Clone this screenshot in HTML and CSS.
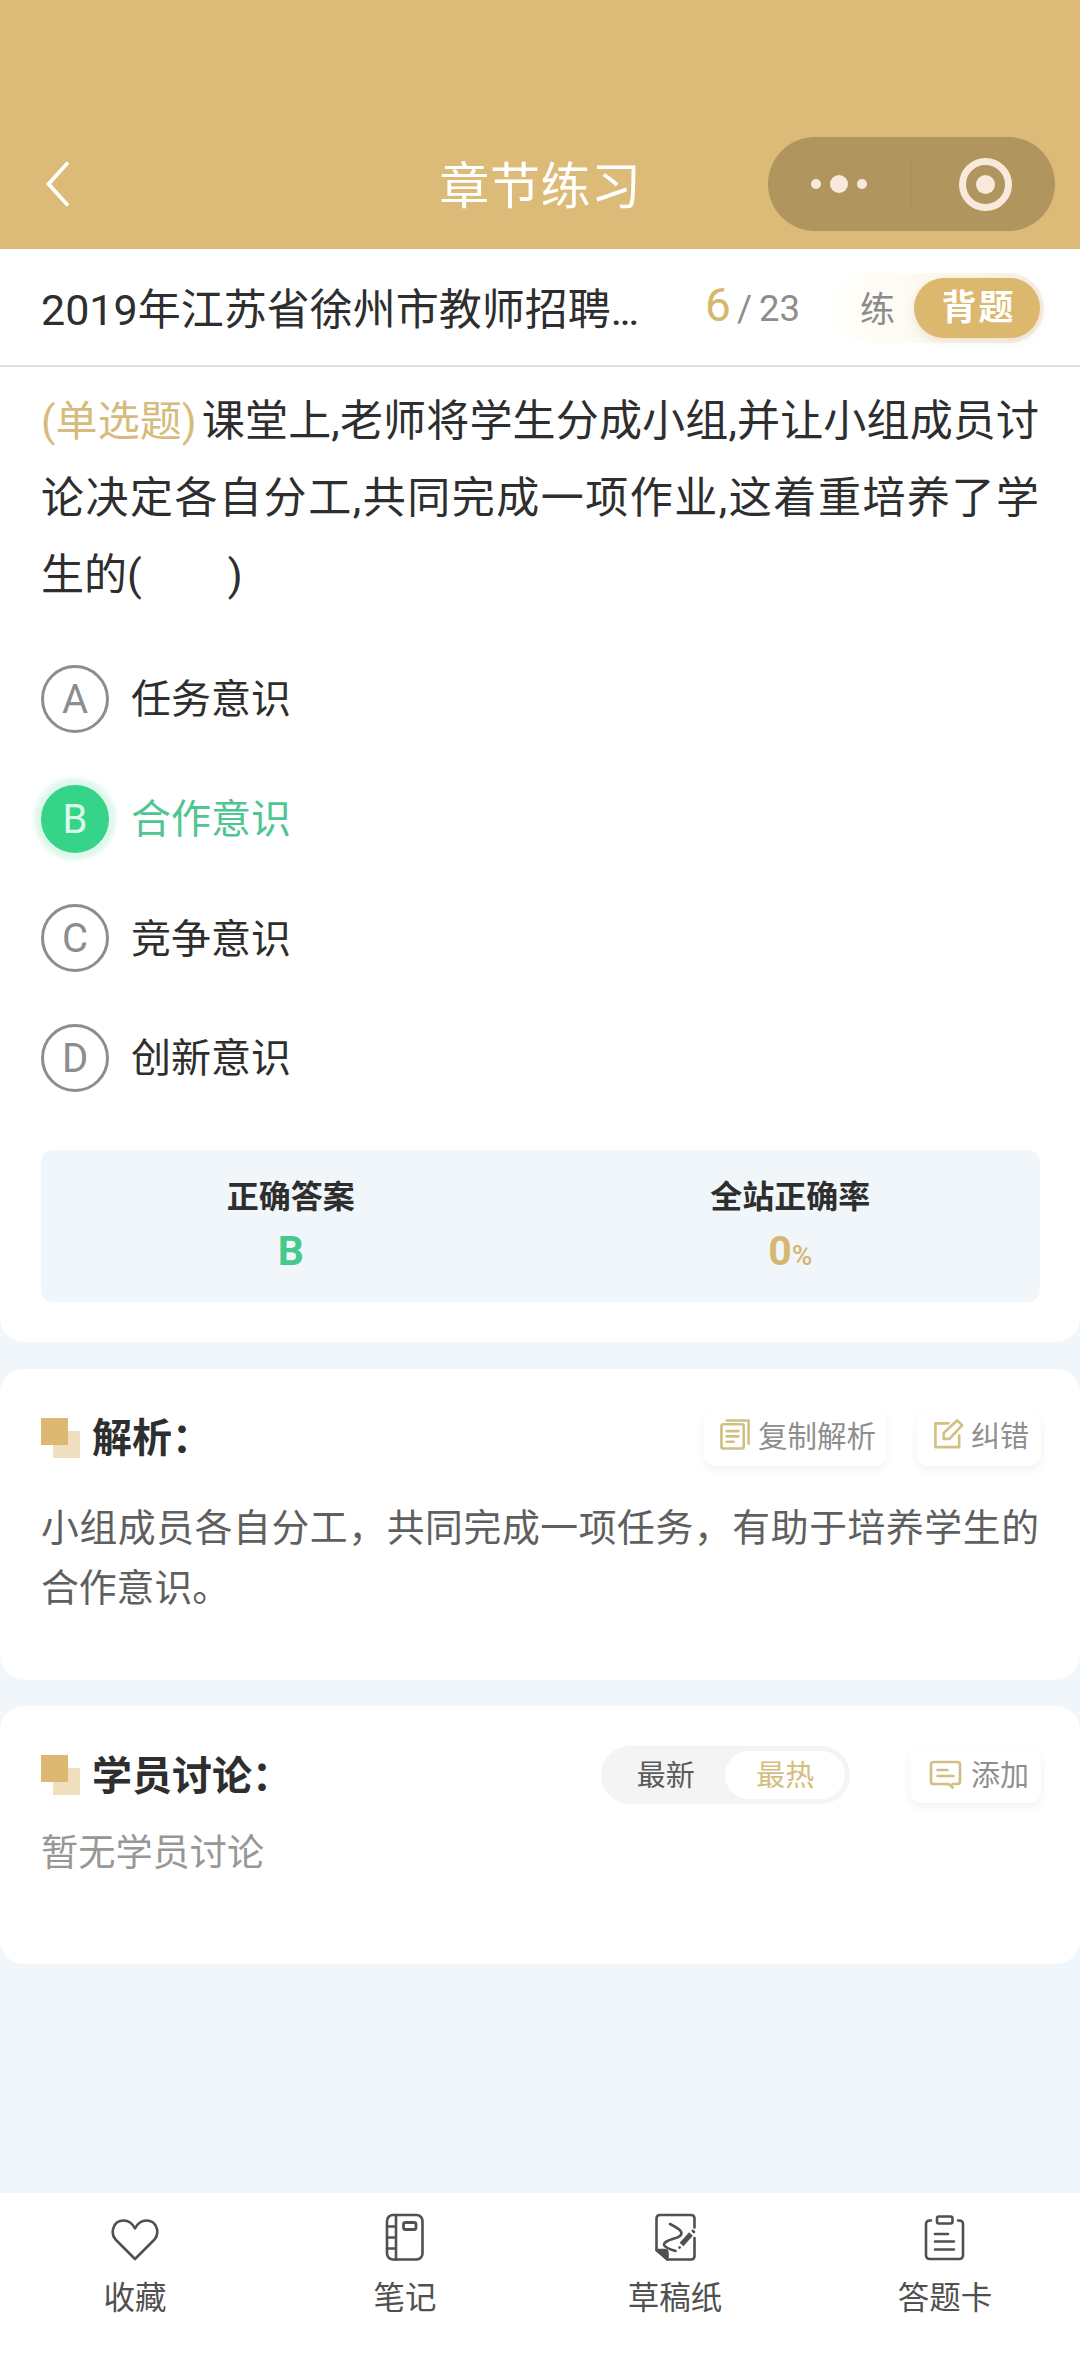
FILE: index.html
```html
<!DOCTYPE html>
<html lang="zh-CN">
<head>
<meta charset="utf-8">
<title>章节练习</title>
<link rel="stylesheet" href="styles.css">
</head>
<body>
<header class="nav">
  <svg class="nav-back" viewBox="0 0 24 46"><path d="M22 1.5 2.5 23 22 44.5"/></svg>
  <h1 class="nav-title">章节练习</h1>
  <div class="capsule">
    <svg viewBox="0 0 287 94">
      <g fill="#f8e9db"><circle cx="48" cy="47" r="5"/><circle cx="71" cy="47" r="9"/><circle cx="94" cy="47" r="5"/><circle cx="217.500" cy="47.500" r="9.500"/></g>
      <path d="M143 21v50" stroke="#a58c58" stroke-width="1"/>
      <circle cx="217.500" cy="47.500" r="23" fill="none" stroke="#f8e9db" stroke-width="7"/>
    </svg>
  </div>
</header>

<section class="paper-bar">
  <div class="paper-name">2019年江苏省徐州市教师招聘<span class="dots">...</span></div>
  <div class="progress"><span class="current">6</span><span class="slash">/</span><span>23</span></div>
  <div class="mode"><span class="mode-item">练</span><span class="mode-item mode-on">背题</span></div>
</section>

<main>
  <section class="card question">
    <p class="stem"><span class="kind">(单选题)</span>课堂上,老师将学生分成小组,并让小组成员讨论决定各自分工,共同完成一项作业,这着重培养了学生的(&#12288;&#12288;)</p>
    <ul class="options">
      <li><span class="mark">A</span><span class="option-text">任务意识</span></li>
      <li class="right"><span class="mark">B</span><span class="option-text">合作意识</span></li>
      <li><span class="mark">C</span><span class="option-text">竞争意识</span></li>
      <li><span class="mark">D</span><span class="option-text">创新意识</span></li>
    </ul>
    <div class="answer">
      <div class="stat"><div class="stat-label">正确答案</div><div class="stat-value green">B</div></div>
      <div class="stat"><div class="stat-label">全站正确率</div><div class="stat-value gold">0<small>%</small></div></div>
    </div>
  </section>

  <section class="card analysis">
    <div class="head">
      <span class="squares"></span>
      <h2>解析：</h2>
      <button class="btn copy">
        <svg viewBox="0 0 32 32"><path d="M7 2h22.500v24"/><rect x="1.500" y="6" width="23" height="25" rx="2"/><path d="M7 13h12M7 18.500h12M7 24h7"/></svg>复制解析</button>
      <button class="btn">
        <svg viewBox="0 0 32 32"><path d="M16 5H2.500v24.500H27V17.500"/><path d="M11 21v-6L25 2l5 5-13 14z"/></svg>纠错</button>
    </div>
    <p class="text">小组成员各自分工，共同完成一项任务，有助于培养学生的合作意识。</p>
  </section>

  <section class="card discuss">
    <div class="head">
      <span class="squares"></span>
      <h2>学员讨论：</h2>
      <div class="sort"><span>最新</span><span class="sort-on">最热</span></div>
      <button class="btn add">
        <svg viewBox="0 0 32 32"><path d="M18 25H4q-2.500 0-2.500-2.500V5.500Q1.500 3 4 3h24q2.500 0 2.500 2.500v17Q30.500 25 28 25h-5"/><path d="M17 25q4 0 6 3.500M8 11h10M8 17h16"/></svg>添加</button>
    </div>
    <p class="empty">暂无学员讨论</p>
  </section>
</main>

<nav class="tabs">
  <a class="tab"><svg viewBox="0 0 48 48"><path d="M24 46 4.500 26.500C-1 20 2 7.500 12.500 7.500c5.500 0 9 3 11.500 8 2.500-5 6-8 11.500-8C46 7.500 49 20 43.500 26.500z"/></svg>收藏</a>
  <a class="tab"><svg viewBox="0 0 48 48"><rect x="6" y="2" width="35.500" height="44.500" rx="6"/><path d="M15 2v44.500M6 13.500h9M6 24.500h9M6 35.500h9"/><rect x="22.500" y="9.500" width="12.500" height="7" rx="2" stroke-width="2.800"/></svg>笔记</a>
  <a class="tab"><svg viewBox="0 0 48 48"><path d="M43.500 14.500V5.500q0-3.500-3.500-3.500H9Q5.500 2 5.500 5.500V37l11 9.500H40q3.500 0 3.500-3.500V25"/><path d="M5.500 37h8q3 0 3 3v6.500z" fill="#505050"/><path d="M19 11q9 4.500 11 7.500c3 6-9 7-13.500 9.500-6 3-5 6 8 10"/><path d="M30.500 31.500 40 21" stroke-width="5" stroke-linecap="butt"/><path d="m28.500 34.500.2-.2M41.800 17.800l1.200 1.200" stroke-width="2.600"/></svg>草稿纸</a>
  <a class="tab"><svg viewBox="0 0 48 48"><path d="M10 7.500H9Q5 7.500 5 11v31q0 4 4 4h29q4 0 4-4V11q0-3.500-4-3.500h-1" /><rect x="16" y="3.500" width="15.500" height="7" rx="2"/><path d="M14 21h13M14 28.500h19M14 36.500h19"/></svg>答题卡</a>
</nav>
</body>
</html>
```
FILE: styles.css
```css
* { box-sizing: border-box; margin: 0; padding: 0; }

body {
  display: flex;
  flex-direction: column;
  width: 1080px;
  height: 2376px;
  background: #f0f6fa;
  color: #2e2e2e;
  font-family: Roboto, "Noto Sans CJK SC", sans-serif;
}

main { flex: 1; }

/* top bar */
.nav {
  display: grid;
  grid-template-columns: 1fr auto 1fr;
  align-items: center;
  height: 249px;
  padding: 119px 25px 0 46px;
  background: #dcba78;
}
.nav-back { width: 24px; height: 46px; fill: none; stroke: #fff; stroke-width: 3.8; }
.nav-title { padding: 6px 20px 0 0; color: #fff; font-size: 50px; font-weight: 400; line-height: 60px; letter-spacing: .6px; }
.capsule { justify-self: end; width: 287px; height: 94px; border-radius: 47px; background: #b0955f; }
.capsule svg { display: block; }

.paper-bar {
  display: flex;
  align-items: center;
  height: 118px;
  padding: 0 36px 0 41px;
  border-bottom: 2px solid #dfe0e2;
  background: #fff;
}
.paper-name { width: 664px; padding-bottom: 3px; font-size: 43px; white-space: nowrap; }
.dots { letter-spacing: -2.500px; }
.progress { display: flex; align-items: baseline; width: 128px; color: #8d8d8f; font-size: 36.500px; line-height: 60px; }
.current { width: 32px; color: #d6b76e; font-size: 46px; }
.slash { width: 22px; }
.mode {
  display: flex;
  align-items: center;
  justify-content: flex-end;
  width: 211px;
  height: 70px;
  margin-top: 1px;
  padding-right: 4px;
  border-radius: 35px;
  background: linear-gradient(90deg, #fffefa, #fbf8ec 60%, #f6f0e6);
  color: #8b8b8b;
  font-size: 35px;
}
.mode-item { margin-right: 19px; padding-bottom: 2px; }
.mode-on {
  width: 126px;
  height: 60px;
  margin-right: 0;
  padding: 0 0 0 3px;
  border-radius: 30px;
  background: #dcb76e;
  box-shadow: 0 3px 8px rgba(190, 160, 110, .25);
  color: #fff;
  font-weight: 700;
  line-height: 61px;
  letter-spacing: 2px;
  text-align: center;
}

.card { border-radius: 24px; background: #fff; }

/* question */
.question { height: 975px; padding: 15px 40px 0 41px; border-radius: 0 0 24px 24px; }
.stem { width: 998px; padding-top: 1px; font-size: 43px; line-height: 77px; text-align: justify; }
.kind { margin-right: 5px; color: #d6bb7c; font-size: 42px; }
.options { display: grid; grid-template-rows: repeat(4, 119.7px); margin-top: 25px; list-style: none; }
.options li { display: flex; align-items: center; gap: 22px; font-size: 40px; }
.option-text { padding-bottom: 5px; }
.mark {
  width: 68px;
  height: 68px;
  border: 3px solid #8d8d90;
  border-radius: 50%;
  color: #8d8d90;
  font-size: 40px;
  line-height: 63px;
  text-align: center;
}
.right { color: #4fc592; }
.right .mark { border-color: #36d488; background: #36d488; box-shadow: 0 0 4px 7px #dff8eb; color: #d9fbe9; }
.answer { display: grid; grid-template-columns: 1fr 1fr; width: 999px; height: 152px; margin-top: 32px; padding-top: 26px; border-radius: 12px; background: #f0f6f9; text-align: center; }
.stat-label { font-size: 32px; font-weight: 700; line-height: 42px; }
.stat-value { font-size: 41px; font-weight: 700; line-height: 50px; margin-top: 8px; }
.stat-value small { font-size: 28px; font-weight: 500; }
.green { color: #45c98d; }
.gold { color: #d6b671; }

/* analysis and discussion */
.analysis { height: 311px; margin-top: 27px; padding: 40px 39px 0 41px; }
.discuss { height: 258px; margin-top: 26px; padding: 40px 39px 0 41px; }
.head { display: flex; align-items: center; height: 58px; }
.squares {
  width: 39px;
  height: 40px;
  margin-bottom: 1px;
  background: linear-gradient(#ddb873, #ddb873) 0 0 / 27px 27px no-repeat,
              linear-gradient(#efdfbf, #efdfbf) 100% 100% / 27px 27px no-repeat;
}
.head h2 { flex: 1; margin-left: 12px; padding-top: 4px; font-size: 40px; line-height: 58px; }
.analysis .head h2 { padding-top: 2px; }
.btn {
  display: flex;
  align-items: center;
  gap: 7px;
  height: 56px;
  margin-left: 30px;
  padding: 0 12px 9px 16px;
  border: 0;
  border-radius: 12px;
  background: #fff;
  box-shadow: 0 4px 8px rgba(60, 70, 80, .07);
  color: #8e8e8e;
  font: 29px Roboto, "Noto Sans CJK SC", sans-serif;
}
.btn svg { width: 31px; height: 32px; fill: none; stroke: #d2bf83; stroke-width: 2.7; stroke-linejoin: round; stroke-linecap: round; }
.btn.copy { padding: 0 11px 9px 16px; font-size: 29.500px; }
.text { width: 998px; margin-top: 31px; color: #5f5f5f; font-size: 37.800px; line-height: 60px; text-align: justify; }
.sort { display: flex; align-items: center; width: 249px; height: 58px; padding: 5px; border-radius: 29px; background: #f4f4f4; color: #5a5a5a; font-size: 29px; }
.sort span { flex: 1; height: 48px; line-height: 50px; text-align: center; }
.sort .sort-on { border-radius: 24px; background: #fff; color: #d4bd7e; }
.btn.add { gap: 9px; margin-left: 60px; padding: 0 12px 4px 19px; }
.add svg { width: 33px; margin-top: 3px; }
.empty { margin-top: 21px; color: #979797; font-size: 37.200px; line-height: 56px; }

/* bottom tabs */
.tabs { display: grid; grid-template-columns: repeat(4, 1fr); height: 183px; padding-top: 20px; background: #fff; }
.tab { display: flex; flex-direction: column; align-items: center; gap: 15px; color: #505050; font-size: 31.500px; line-height: 46px; }
.tab svg { width: 48px; height: 48px; fill: none; stroke: #505050; stroke-width: 2.6; stroke-linecap: round; stroke-linejoin: round; }
```
